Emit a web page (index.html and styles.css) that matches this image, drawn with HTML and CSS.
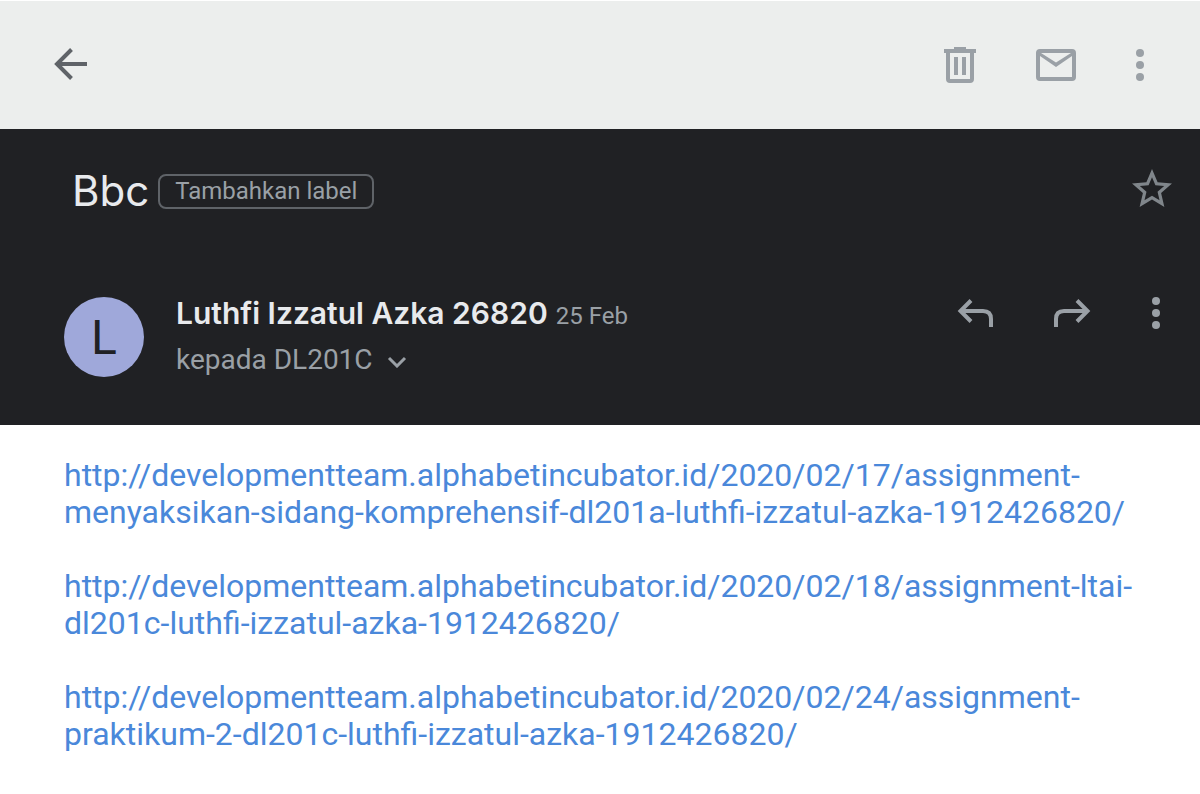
FILE: index.html
```html
<!DOCTYPE html>
<html lang="id">
<head>
<meta charset="utf-8">
<meta name="viewport" content="width=device-width, initial-scale=1">
<title>Bbc</title>
<link rel="stylesheet" href="styles.css">
</head>
<body>
<header class="toolbar">
  <button class="icon-btn back" type="button" aria-label="Kembali">
    <svg viewBox="0 0 48 48"><path class="line" d="M43 23H13M27.500 8.500 13 23 27.500 37.500"/></svg>
  </button>
  <div class="actions">
    <button class="icon-btn" type="button" aria-label="Hapus">
      <svg viewBox="0 0 48 48"><path fill-rule="evenodd" d="M18 6h12v2h10v4h-2v26a4 4 0 0 1-4 4H14a4 4 0 0 1-4-4V12H8V8h10zM14 12v26h20V12z"/><path d="M18 16h4v18h-4zM26 16h4v18h-4z"/></svg>
    </button>
    <button class="icon-btn" type="button" aria-label="Tandai belum dibaca">
      <svg viewBox="0 0 48 48"><path fill-rule="evenodd" d="M8 8h32a4 4 0 0 1 4 4v24a4 4 0 0 1-4 4H8a4 4 0 0 1-4-4V12a4 4 0 0 1 4-4zM8 15v21h32V15L24 26zM9 12l15 9.500L39 12z"/></svg>
    </button>
    <button class="icon-btn narrow" type="button" aria-label="Opsi lainnya">
      <svg viewBox="0 0 24 48"><circle cx="12" cy="12" r="4"/><circle cx="12" cy="24" r="4"/><circle cx="12" cy="36" r="4"/></svg>
    </button>
  </div>
</header>
<main>
  <section class="message-head">
    <div class="subject-row">
      <h1 class="subject">Bbc</h1>
      <button class="label-btn" type="button">Tambahkan label</button>
      <button class="icon-btn star" type="button" aria-label="Beri bintang">
        <svg viewBox="0 0 24 24"><path d="M22 9.240l-7.190-.62L12 2 9.190 8.630 2 9.240l5.460 4.730L5.820 21 12 17.270 18.180 21l-1.630-7.030L22 9.240zM12 15.400l-3.760 2.270 1-4.280-3.320-2.880 4.380-.38L12 6.100l1.710 4.040 4.380.38-3.320 2.880 1 4.280L12 15.400z"/></svg>
      </button>
    </div>
    <div class="sender-row">
      <div class="avatar" aria-hidden="true">L</div>
      <div class="sender">
        <div class="from"><span class="name">Luthfi Izzatul Azka 26820</span><time class="date" datetime="2020-02-25">25 Feb</time></div>
        <button class="recipients" type="button">kepada DL201C
          <svg viewBox="0 0 20 12"><path class="line" d="M2 2l8 8 8-8"/></svg>
        </button>
      </div>
      <div class="actions">
        <button class="icon-btn" type="button" aria-label="Balas">
          <svg viewBox="0 0 48 48"><path class="line" d="M19 11.500 8.500 22 19 32.500M9 22h22q8 0 8 8v8"/></svg>
        </button>
        <button class="icon-btn" type="button" aria-label="Teruskan">
          <svg viewBox="0 0 48 48"><path class="line" d="M29 11.500 39.500 22 29 32.500M39 22H16q-8 0-8 8v8"/></svg>
        </button>
        <button class="icon-btn narrow" type="button" aria-label="Opsi pesan">
          <svg viewBox="0 0 24 48"><circle cx="12" cy="12" r="4"/><circle cx="12" cy="24" r="4"/><circle cx="12" cy="36" r="4"/></svg>
        </button>
      </div>
    </div>
  </section>
  <article class="body">
    <p><a href="http://developmentteam.alphabetincubator.id/2020/02/17/assignment-menyaksikan-sidang-komprehensif-dl201a-luthfi-izzatul-azka-1912426820/">http://developmentteam.alphabetincubator.id/2020/02/17/assignment-<wbr>menyaksikan-sidang-komprehensif-dl201a-luthfi-izzatul-azka-1912426820/</a></p>
    <p><a href="http://developmentteam.alphabetincubator.id/2020/02/18/assignment-ltai-dl201c-luthfi-izzatul-azka-1912426820/">http://developmentteam.alphabetincubator.id/2020/02/18/assignment-ltai-<wbr>dl201c-luthfi-izzatul-azka-1912426820/</a></p>
    <p><a href="http://developmentteam.alphabetincubator.id/2020/02/24/assignment-praktikum-2-dl201c-luthfi-izzatul-azka-1912426820/">http://developmentteam.alphabetincubator.id/2020/02/24/assignment-<wbr>praktikum-2-dl201c-luthfi-izzatul-azka-1912426820/</a></p>
  </article>
</main>
</body>
</html>
```
FILE: styles.css
```css
* {
  box-sizing: border-box;
}

body {
  margin: 0;
  background: #fff;
  font-family: Roboto, "Liberation Sans", sans-serif;
}

button {
  padding: 0;
  border: 0;
  background: none;
  color: inherit;
  font: inherit;
  cursor: pointer;
}

svg {
  display: block;
  fill: currentColor;
}

.line {
  fill: none;
  stroke: currentColor;
  stroke-width: 4;
}

.toolbar {
  display: flex;
  align-items: center;
  justify-content: space-between;
  height: 129px;
  padding: 0 48px 0 44px;
  border-top: 1px solid #fff;
  background: #eceeed;
  color: #9aa0a6;
}

.back {
  color: #5f6368;
}

.actions {
  display: flex;
  gap: 48px;
}

.icon-btn {
  flex: none;
  width: 48px;
  height: 48px;
}

.narrow {
  width: 24px;
}

.message-head {
  padding: 36px 0 42px;
  background: #202124;
  color: #9aa0a6;
}

.subject-row {
  display: flex;
  align-items: center;
  padding: 0 24px 0 72px;
}

.subject {
  margin: 0;
  color: #e8eaed;
  font: 400 42px/52px Inter, Roboto, sans-serif;
}

.label-btn {
  height: 35px;
  margin-left: 9px;
  padding: 0 15px;
  border: 2px solid #5f6368;
  border-radius: 8px;
  font-size: 24px;
  line-height: 30px;
}

.star {
  align-self: flex-start;
  margin-left: auto;
  color: #80868b;
}

.sender-row {
  display: flex;
  align-items: flex-start;
  padding: 72px 32px 0 64px;
}

.avatar {
  flex: none;
  width: 80px;
  height: 80px;
  margin-top: 8px;
  border-radius: 50%;
  background: #9fa8da;
  color: #202124;
  font-size: 48px;
  font-weight: 400;
  line-height: 82px;
  text-align: center;
}

.sender {
  flex: 1;
  margin-left: 32px;
}

.from {
  display: flex;
  align-items: baseline;
  gap: 8px;
  height: 48px;
  line-height: 48px;
}

.name {
  color: #e8eaed;
  font-family: Inter, Roboto, sans-serif;
  font-size: 30px;
  font-weight: 600;
}

.date {
  font-size: 24px;
}

.recipients {
  display: flex;
  align-items: center;
  gap: 14px;
  font-size: 28px;
  line-height: 46px;
}

.recipients svg {
  width: 20px;
  height: 12px;
  margin-top: 4px;
}

.recipients .line {
  stroke-width: 3;
}

.body {
  padding: 32px 64px;
  color: #4a88da;
  font-size: 32px;
  line-height: 37px;
}

.body p {
  margin: 0 0 37px;
}

.body a {
  color: inherit;
  text-decoration: none;
}
```
